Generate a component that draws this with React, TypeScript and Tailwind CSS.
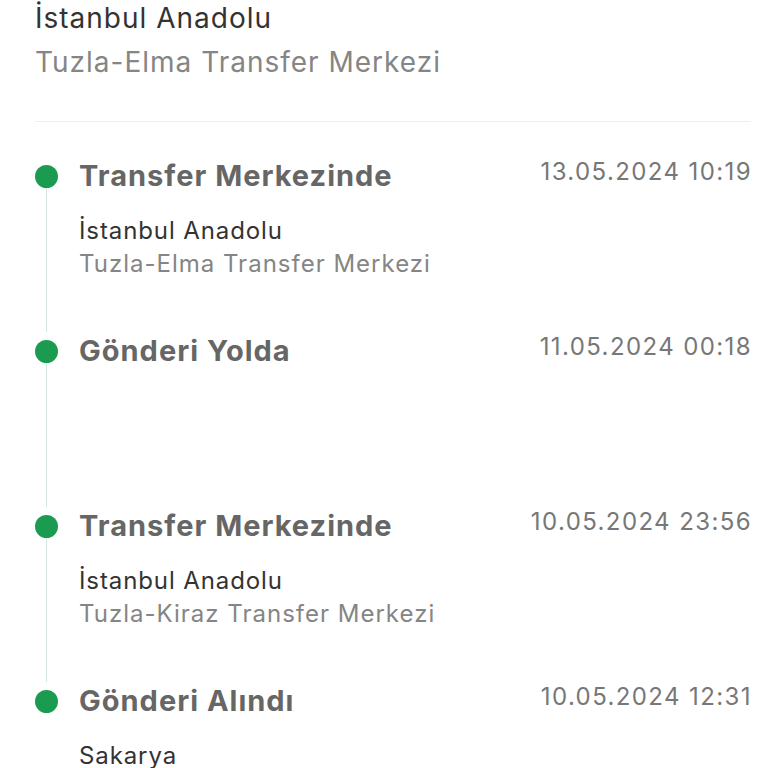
import React from "react";

type Step = {
  title: string;
  date: string;
  lines: string[];
};

const steps: Step[] = [
  {
    title: "Transfer Merkezinde",
    date: "13.05.2024 10:19",
    lines: ["İstanbul Anadolu", "Tuzla-Elma Transfer Merkezi"],
  },
  { title: "Gönderi Yolda", date: "11.05.2024 00:18", lines: [] },
  {
    title: "Transfer Merkezinde",
    date: "10.05.2024 23:56",
    lines: ["İstanbul Anadolu", "Tuzla-Kiraz Transfer Merkezi"],
  },
  { title: "Gönderi Alındı", date: "10.05.2024 12:31", lines: ["Sakarya"] },
];

const App: React.FC = () => {
  return (
    <div
      className="h-[768px] overflow-hidden bg-white pl-[35px] pr-[17px]"
      style={{ fontFamily: "Inter, 'Noto Sans', sans-serif" }}
    >
      <div>
        <p className="-mt-[1px] text-[28px] leading-[38px] tracking-[1px] text-[#333]">
          İstanbul Anadolu
        </p>
        <p className="mt-[3px] text-[28px] leading-[44px] tracking-[1px] text-[#858585]">
          Tuzla-Elma Transfer Merkezi
        </p>
      </div>
      <div className="mt-[37px] border-t border-[#f0f0f0]" />

      <div className="mt-[35px]">
        {steps.map((step, i) => {
          const last = i === steps.length - 1;
          return (
            <div key={i} className="flex h-[175px]">
              <div className="flex w-[23px] flex-col items-center pt-[8px]">
                <span className="h-[23px] w-[23px] shrink-0 rounded-full bg-[#1a9b50]" />
                {!last && <span className="w-px flex-1 bg-[#d5e8df]" />}
              </div>
              <div className="ml-[21px] flex-1">
                <div className="flex items-start justify-between">
                  <h3 className="text-[29px] font-bold leading-[38px] tracking-[1px] text-[#666]">
                    {step.title}
                  </h3>
                  <span className="-mt-[1px] -mr-[1px] text-[24px] leading-[32px] tracking-[1.4px] text-[#777]">
                    {step.date}
                  </span>
                </div>
                <div className="mt-[19px]">
                  {step.lines.map((line, j) => (
                    <p
                      key={j}
                      className={
                        j === 0
                          ? "text-[24px] leading-[33px] tracking-[0.9px] text-[#333]"
                          : "text-[24px] leading-[33px] tracking-[1px] text-[#858585]"
                      }
                    >
                      {line}
                    </p>
                  ))}
                </div>
              </div>
            </div>
          );
        })}
      </div>
    </div>
  );
};

export default App;
